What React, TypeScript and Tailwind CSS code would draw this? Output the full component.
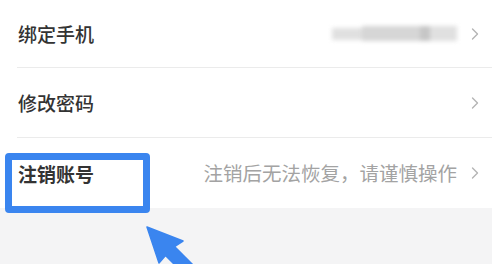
import { ReactNode } from 'react';

function Chevron() {
  return (
    <svg width="8" height="12" viewBox="0 0 8 12" className="shrink-0">
      <path d="M1.5 1 L6.5 6 L1.5 11" fill="none" stroke="#b4b4b4" strokeWidth="1.4" strokeLinecap="round" strokeLinejoin="round" />
    </svg>
  );
}

function Row({ label, right, height, bold }: { label: string; right?: ReactNode; height: string; bold?: boolean }) {
  return (
    <div className={`flex items-center pl-[18px] pr-[13px] ${height}`}>
      <span className={`text-[19px] leading-none text-[#333333] ${bold ? 'font-bold' : 'font-medium'}`}>{label}</span>
      <div className="ml-auto flex items-center gap-[14px]">
        {right}
        <Chevron />
      </div>
    </div>
  );
}

function BlurredPhone() {
  return (
    <div className="flex h-[17px] w-[125px] items-center blur-[2px]">
      <div className="h-[12px] w-[30px] bg-[#e0e0e0]" />
      <div className="h-[15px] w-[58px] bg-[#d6d6d6]" />
      <div className="h-[15px] w-[10px] bg-[#c6c6c6]" />
      <div className="h-[15px] w-[27px] bg-[#e0e0e0]" />
    </div>
  );
}

export default function App() {
  return (
    <div
      className="relative h-[264px] w-[492px] overflow-hidden bg-[#f4f4f5]"
      style={{ fontFamily: '"Noto Sans CJK SC", "Noto Sans", sans-serif' }}
    >
      <div className="bg-white">
        <Row label="绑定手机" height="h-[67px]" right={<BlurredPhone />} />
        <div className="ml-[17px] h-px bg-[#ebebeb]" />
        <Row label="修改密码" height="h-[69px]" />
        <div className="ml-[17px] h-px bg-[#ebebeb]" />
        <Row
          label="注销账号"
          bold
          height="h-[70px]"
          right={<span className="text-[19.5px] leading-none text-[#a3a3a3]">注销后无法恢复，请谨慎操作</span>}
        />
      </div>

      {/* annotation frame */}
      <div className="absolute left-[5px] top-[153px] h-[60px] w-[145px] rounded-[4px] border-[7px] border-[#3a85ef]" />

      {/* annotation arrow */}
      <svg className="absolute left-0 top-0" width="492" height="264" viewBox="0 0 492 264">
        <polygon
          points="147,227 183,241 174.5,246.5 204,276 195,285 165.5,255.5 159,263"
          fill="#3a85ef"
          stroke="#3a85ef"
          strokeWidth="1.5"
          strokeLinejoin="round"
        />
      </svg>
    </div>
  );
}
